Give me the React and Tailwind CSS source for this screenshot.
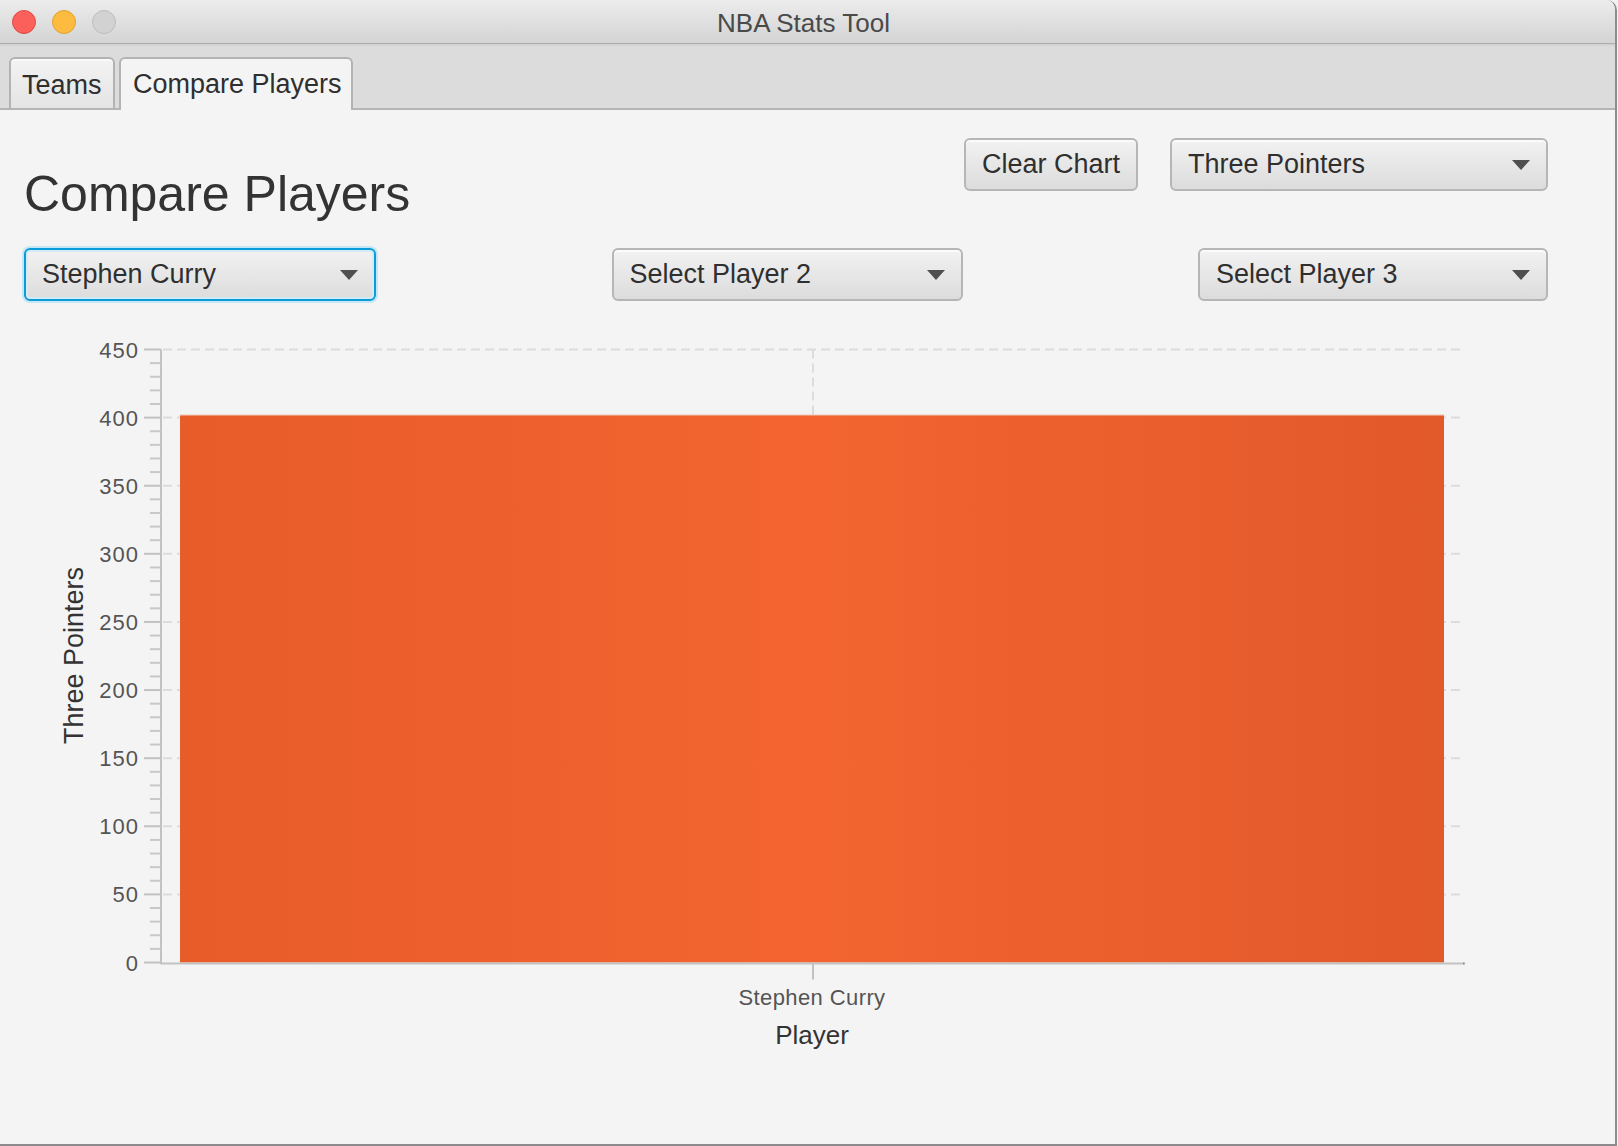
import React from "react";

const Y0 = 652.5;
const PX = 613 / 450;
const yOf = (v) => Y0 - v * PX;

function Arrow() {
  return (
    <svg width="18" height="10" viewBox="0 0 18 10" className="shrink-0">
      <polygon points="0,0 18,0 9,10" fill="#4f4f4f" />
    </svg>
  );
}

function Combo({ label, width, focused }) {
  return (
    <div
      className={`flex h-[53px] items-center justify-between rounded-[6px] border-2 bg-linear-to-b from-[#f2f2f2] to-[#dcdcdc] pl-[16px] pr-[16px] text-[27px] text-[#2f2f2f] ${
        focused
          ? "border-[#0b9bd8] shadow-[0_0_0_2px_#c4e6f5,inset_0_0_0_2px_#d2ecf7]"
          : "border-[#b6b6b6] shadow-[inset_0_2px_0_#fbfbfb]"
      }`}
      style={{ width }}
    >
      <span>{label}</span>
      <Arrow />
    </div>
  );
}

function Chart() {
  const majors = [0, 50, 100, 150, 200, 250, 300, 350, 400, 450];
  const minors = [];
  for (let v = 10; v < 450; v += 10) if (v % 50 !== 0) minors.push(v);
  const barTop = yOf(402);

  return (
    <svg width="1616" height="750" className="block" style={{ fontFamily: "'Liberation Sans', Arial, sans-serif" }}>
      <defs>
        <linearGradient id="barFill" x1="0" y1="0" x2="1" y2="0">
          <stop offset="0%" stopColor="#e85c2a" />
          <stop offset="50%" stopColor="#f36430" />
          <stop offset="100%" stopColor="#e2592a" />
        </linearGradient>
      </defs>

      {/* grid */}
      {majors.slice(1).map((v) => (
        <line key={"g" + v} x1="163" x2="1462" y1={yOf(v)} y2={yOf(v)} stroke="#dcdcdc" strokeWidth="2" strokeDasharray="9 5" />
      ))}
      <line x1="813" x2="813" y1={yOf(450)} y2={Y0} stroke="#dcdcdc" strokeWidth="2" strokeDasharray="9 5" />

      {/* bar */}
      <rect x="180" y={barTop} width="1264" height={Y0 - barTop} fill="url(#barFill)" />
      <line x1="180" x2="1444" y1={barTop + 0.5} y2={barTop + 0.5} stroke="#eea080" strokeWidth="1" />

      {/* y axis */}
      <line x1="161" x2="161" y1={yOf(450)} y2={Y0 + 1} stroke="#c2c2c2" strokeWidth="2" />
      {minors.map((v) => (
        <line key={"m" + v} x1="150" x2="161" y1={yOf(v)} y2={yOf(v)} stroke="#c8c8c8" strokeWidth="2" />
      ))}
      {majors.map((v) => (
        <g key={"t" + v}>
          <line x1="144" x2="161" y1={yOf(v)} y2={yOf(v)} stroke="#c2c2c2" strokeWidth="2" />
          <text x="139" y={yOf(v) + 8} textAnchor="end" fontSize="22" fill="#545454" style={{ letterSpacing: "1px" }}>
            {v}
          </text>
        </g>
      ))}
      <text transform="translate(83 345.5) rotate(-90)" textAnchor="middle" fontSize="27" fill="#333333">
        Three Pointers
      </text>

      {/* x axis */}
      <line x1="160" x2="1464" y1={Y0 + 1} y2={Y0 + 1} stroke="#c2c2c2" strokeWidth="2" />
      <line x1="1464" x2="1464" y1={Y0} y2={Y0 + 2} stroke="#555555" strokeWidth="1" />
      <line x1="813" x2="813" y1={Y0 + 1} y2={Y0 + 17} stroke="#c2c2c2" strokeWidth="2" />
      <text x="812" y="695" textAnchor="middle" fontSize="22" fill="#545454" style={{ letterSpacing: "0.4px" }}>
        Stephen Curry
      </text>
      <text x="812" y="734" textAnchor="middle" fontSize="26" fill="#333333">
        Player
      </text>
    </svg>
  );
}

export default function App() {
  return (
    <div className="h-[1146px] w-[1618px] bg-[#f2f2f2] font-['Liberation_Sans',Arial,sans-serif]">
      <div className="flex h-[1146px] w-[1617px] flex-col overflow-hidden rounded-tr-[10px] border-r-2 border-b-2 border-[#8c8c8c] bg-[#f4f4f4]">
        {/* title bar */}
        <div className="grid h-[44px] shrink-0 grid-cols-[1fr_auto_1fr] items-center border-b border-[#adadad] bg-linear-to-b from-[#ececec] to-[#d4d4d4]">
          <div className="flex items-center gap-[16px] pl-[12px]">
            <span className="h-[24px] w-[24px] rounded-full border border-[#df4a44] bg-[#fc605b]" />
            <span className="h-[24px] w-[24px] rounded-full border border-[#dea234] bg-[#fdbc3f]" />
            <span className="h-[24px] w-[24px] rounded-full border border-[#bdbdbd] bg-[#d2d2d2]" />
          </div>
          <div className="pt-[2px] pr-[8px] text-[26px] leading-none text-[#4a4a4a]">NBA Stats Tool</div>
          <div />
        </div>

        {/* tab bar */}
        <div className="flex h-[66px] shrink-0 items-end gap-[4px] border-b-2 border-[#b5b5b5] bg-[#dcdcdc] pl-[9px] shadow-[inset_0_3px_3px_-2px_rgba(0,0,0,0.08)]">
          <div className="flex h-[51px] w-[106px] items-center rounded-t-[6px] border-2 border-b-0 border-[#b3b3b3] bg-linear-to-b from-[#f3f3f3] to-[#e4e4e4] pt-[3px] pl-[11px] text-[27px] text-[#2f2f2f] shadow-[inset_0_2px_0_#fafafa]">
            Teams
          </div>
          <div className="relative -mb-[2px] flex h-[53px] w-[234px] items-center rounded-t-[6px] border-2 border-b-0 border-[#b3b3b3] bg-[#f4f4f4] pl-[12px] text-[27px] text-[#2f2f2f]">
            Compare Players
          </div>
        </div>

        {/* content */}
        <div className="flex flex-1 flex-col">
          <div className="pt-[28px] pl-[24px] pr-[67px]">
            <div className="flex items-start justify-between">
              <h1 className="mt-[28px] text-[50px] leading-[56px] font-normal text-[#333333]">Compare Players</h1>
              <div className="flex gap-[32px]">
                <button className="flex h-[53px] w-[174px] items-center justify-center rounded-[6px] border-2 border-[#b6b6b6] bg-linear-to-b from-[#f2f2f2] to-[#dcdcdc] text-[27px] text-[#2f2f2f] shadow-[inset_0_2px_0_#fbfbfb]">
                  Clear Chart
                </button>
                <Combo label="Three Pointers" width={378} />
              </div>
            </div>
            <div className="mt-[26px] flex justify-between">
              <Combo label="Stephen Curry" width={352} focused />
              <Combo label="Select Player 2" width={351} />
              <Combo label="Select Player 3" width={350} />
            </div>
          </div>
          <div className="mt-[9px]">
            <Chart />
          </div>
        </div>
      </div>
    </div>
  );
}
